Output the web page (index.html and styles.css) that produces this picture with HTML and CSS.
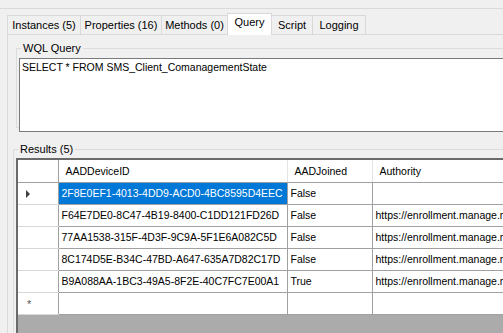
FILE: index.html
```html
<!DOCTYPE html>
<html>
<head>
<meta charset="utf-8">
<link rel="stylesheet" href="styles.css">
</head>
<body>
<div class="outer">
  <div class="tabctl">
    <div class="tabs">
      <div class="tab t1">Instances (5)</div>
      <div class="tab t2">Properties (16)</div>
      <div class="tab t3">Methods (0)</div>
      <div class="tab t4 active">Query</div>
      <div class="tab t5">Script</div>
      <div class="tab t6">Logging</div>
    </div>
    <div class="panel">
      <fieldset class="group wql">
        <legend>WQL Query</legend>
        <div class="textbox">SELECT * FROM SMS_Client_ComanagementState</div>
      </fieldset>
      <fieldset class="group results">
        <legend>Results (5)</legend>
        <div class="grid">
          <table>
            <colgroup>
              <col class="c0"><col class="c1"><col class="c2"><col class="c3">
            </colgroup>
            <thead>
              <tr><th class="rh"></th><th>AADDeviceID</th><th>AADJoined</th><th>Authority</th></tr>
            </thead>
            <tbody>
              <tr><td class="rh"><span class="arrow"></span></td><td class="sel">2F8E0EF1-4013-4DD9-ACD0-4BC8595D4EEC</td><td>False</td><td></td></tr>
              <tr><td class="rh"></td><td>F64E7DE0-8C47-4B19-8400-C1DD121FD26D</td><td>False</td><td>https://enrollment.manage.microsoft.com</td></tr>
              <tr><td class="rh"></td><td>77AA1538-315F-4D3F-9C9A-5F1E6A082C5D</td><td>False</td><td>https://enrollment.manage.microsoft.com</td></tr>
              <tr><td class="rh"></td><td>8C174D5E-B34C-47BD-A647-635A7D82C17D</td><td>False</td><td>https://enrollment.manage.microsoft.com</td></tr>
              <tr><td class="rh"></td><td>B9A088AA-1BC3-49A5-8F2E-40C7FC7E00A1</td><td>True</td><td>https://enrollment.manage.microsoft.com</td></tr>
              <tr class="newrow"><td class="rh"><span class="star">*</span></td><td></td><td></td><td></td></tr>
            </tbody>
          </table>
        </div>
      </fieldset>
    </div>
  </div>
</div>
</body>
</html>
```
FILE: styles.css
```css
html, body {
  margin: 0;
  padding: 0;
  background: #f0f0f0;
  overflow: hidden;
  width: 503px;
  height: 333px;
}
body {
  font-family: "Liberation Sans", Arial, sans-serif;
  font-size: 11px;
  color: #000;
}
.outer {
  margin-top: 8px;
  border-top: 1px solid #dadada;
  width: 700px;
  height: 324px;
  overflow: hidden;
}
.tabctl {
  margin-left: 7px;
  padding-top: 4px;
}
.tabs {
  display: flex;
  align-items: flex-end;
  height: 21px;
  position: relative;
  z-index: 1;
}
.tab {
  box-sizing: border-box;
  height: 19px;
  border: 1px solid #d9d9d9;
  border-bottom: none;
  border-right: none;
  background: #f0f0f0;
  line-height: 18px;
  text-align: center;
}
.tab.t6 { border-right: 1px solid #d9d9d9; }
.t1 { width: 73px; }
.t2 { width: 81px; }
.t3 { width: 66px; }
.t4 { width: 45px; }
.t5 { width: 40px; }
.t6 { width: 54px; }
.tab.active {
  height: 22px;
  margin-bottom: -1px;
  background: #fff;
  border-right: 1px solid #d9d9d9;
  margin-right: -1px;
  line-height: 16px;
  padding-bottom: 4px;
}
.tab.active + .tab { border-left: none; margin-left: 1px; }
.panel {
  border-top: 1px solid #d9d9d9;
  border-left: 1px solid #d9d9d9;
  height: 300px;
  padding-left: 5px;
}
.group {
  margin: 0;
  border: 1px solid #dcdcdc;
  border-right: none;
  padding: 0;
}
.group legend {
  padding: 0 2px;
  margin-left: 4px;
  line-height: 13px;
}
.wql {
  margin-left: 3px;
  margin-top: 7px;
  height: 86px;
  box-sizing: border-box;
}
.textbox {
  margin-left: 2px;
  margin-top: 3px;
  height: 74px;
  border: 1px solid #7a7a7a;
  border-right: none;
  background: #fff;
  padding: 2px 2px;
  box-sizing: border-box;
  line-height: 13px;
  font-size: 10.5px;
}
.results {
  margin-top: 15px;
}
.grid {
  margin-left: 2px;
  margin-top: 2px;
  border-top: 2px solid #6a6a6a;
  border-left: 2px solid #6a6a6a;
  background: #ababab;
  height: 200px;
}
table {
  border-collapse: collapse;
  table-layout: fixed;
  width: 560px;
  font-size: 10.5px;
}
col.c0 { width: 40px; }
col.c1 { width: 229px; }
col.c2 { width: 85px; }
col.c3 { width: 206px; }
th, td {
  height: 22px;
  padding: 0 0 0 3px;
  white-space: nowrap;
  overflow: hidden;
  background: #fff;
  border: 1px solid #a0a0a0;
  text-align: left;
  font-weight: normal;
  box-sizing: border-box;
}
th {
  border-color: #e5e5e5;
  border-bottom: 1px solid #a0a0a0;
  padding-left: 7px;
}
tr:first-child th { border-top: none; }
th:first-child, td:first-child { border-left: none; }
td.rh, th.rh {
  border-color: #d8d8d8;
  padding: 0;
  position: relative;
}
th.rh { border-bottom: 1px solid #a0a0a0; border-right-color: #a0a0a0; }
td.rh { border-right-color: #a0a0a0; }
td.sel {
  background: #0078d7;
  color: #fff;
  padding-left: 3px;
}
.arrow {
  position: absolute;
  left: 8px;
  top: 7px;
  width: 0;
  height: 0;
  border-left: 4px solid #404040;
  border-top: 4px solid transparent;
  border-bottom: 4px solid transparent;
}
.star {
  position: absolute;
  left: 9px;
  top: 5px;
  color: #555;
  font-size: 11px;
}
```
